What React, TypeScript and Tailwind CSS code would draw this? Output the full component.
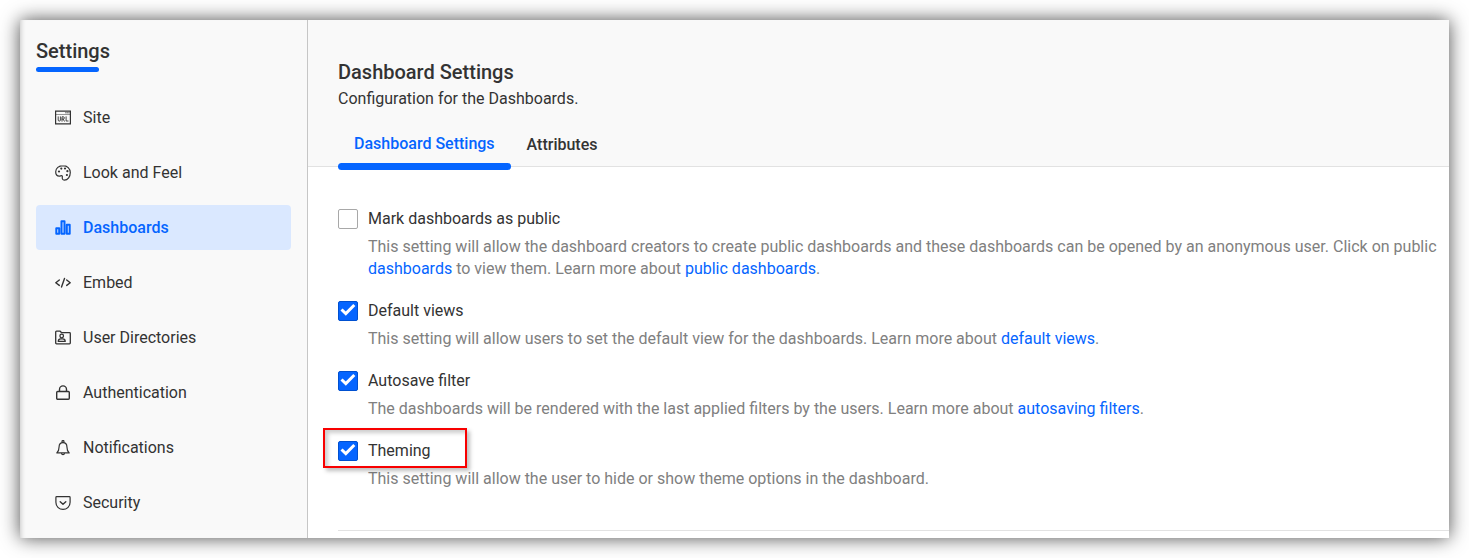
import React, { useState } from "react";

const strokeProps = {
  viewBox: "0 0 16 16",
  fill: "none",
  stroke: "currentColor",
  strokeWidth: 1.2,
  strokeLinecap: "round" as const,
  strokeLinejoin: "round" as const,
  className: "size-4 shrink-0",
  "aria-hidden": true,
};

const SiteIcon = () => (
  <svg {...strokeProps} strokeLinejoin="miter">
    <path d="M0.6 1.1h14.8v12.8H0.6z" />
    <path d="M1 4.5h14" strokeWidth="0.5" />
    <path d="M10.5 2.8h.8M12.3 2.8h.8M14 2.8h.3" strokeWidth="0.8" />
    <path
      d="M3.2 6.8v3.2a1.1 1.1 0 0 0 2.2 0V6.8M7 11.2V6.8h1.2a1.1 1.1 0 0 1 0 2.3H7M8.2 9.2l1.2 2M11.1 6.8v4.200h2"
      strokeWidth="0.9"
    />
  </svg>
);

const PaletteIcon = () => (
  <svg {...strokeProps}>
    <path d="M8 .6C3.8.6.7 3.2.7 6.8c0 2.6 1.6 4.400 3.600 4.400 1 0 1.500-.5 2.200-.5.900 0 1 .7.8 1.500-.3 1.600.4 2.900 2 2.900 3.600 0 6-3.600 6-7.500C15.300 3.500 12.200.6 8 .6z" />
    <g fill="currentColor" stroke="none">
      <circle cx="4" cy="6.5" r="1.1" />
      <circle cx="6.3" cy="3.6" r="1.1" />
      <circle cx="10" cy="3.5" r="1.1" />
      <circle cx="12.4" cy="6.2" r="1.1" />
      <circle cx="11.9" cy="10" r="1.1" />
    </g>
  </svg>
);

const ChartIcon = () => (
  <svg {...strokeProps} strokeWidth={2}>
    <path d="M1.3 8.3h2.900v5.500H1.300zM6.500 1.300h3v12.500h-3zM11.800 4.800h2.900v9h-2.900z" />
  </svg>
);

const CodeIcon = () => (
  <svg {...strokeProps} strokeWidth={1.4}>
    <path d="M4.300 5 .8 7.700l3.500 2.700M11.700 5 15.200 7.700l-3.500 2.700M9.500 3.500 6.500 12" />
  </svg>
);

const DirectoryIcon = () => (
  <svg {...strokeProps} strokeWidth={1.3}>
    <path d="M.7 13V2c0-.5.3-.8.8-.8h3.700l1.400 1.500h7.900c.5 0 .8.3.8.8V13c0 .5-.3.800-.8.800h-13c-.5 0-.8-.3-.8-.8z" />
    <circle cx="6.7" cy="6" r="1.8" />
    <path d="M3.300 11.400c0-1.800 1.200-2.600 2.400-2.600h2c1.300 0 2.500.8 2.500 2.600z" />
  </svg>
);

const LockIcon = () => (
  <svg {...strokeProps} strokeWidth={1.4}>
    <rect x="1.7" y="6.5" width="12.6" height="7.8" rx="1" />
    <path d="M4.500 6.300V4.400a3.500 3.500 0 0 1 7 0v1.900" />
  </svg>
);

const BellIcon = () => (
  <svg {...strokeProps}>
    <circle cx="8" cy="1.5" r="1" />
    <path d="M8 2.600c-2.600 0-3.900 1.800-3.900 4.100 0 3.300-.7 4.700-2.300 6.200h12.400c-1.600-1.500-2.300-2.900-2.300-6.200 0-2.300-1.300-4.100-3.900-4.100zM6.500 13.200c.2 1.900 2.800 1.900 3 0" />
  </svg>
);

const ShieldIcon = () => (
  <svg {...strokeProps}>
    <path d="M1.700 1.600h12.600c.5 0 .8.3.8.8v4.800c0 4-3 7.200-7.100 7.200S.9 11.200.9 7.200V2.400c0-.5.3-.8.8-.8z" />
    <path d="M5.200 6.700 8 9.300l2.800-2.600" strokeWidth="1.4" />
  </svg>
);

const navItems = [
  { label: "Site", icon: SiteIcon },
  { label: "Look and Feel", icon: PaletteIcon },
  { label: "Dashboards", icon: ChartIcon, active: true },
  { label: "Embed", icon: CodeIcon },
  { label: "User Directories", icon: DirectoryIcon },
  { label: "Authentication", icon: LockIcon },
  { label: "Notifications", icon: BellIcon },
  { label: "Security", icon: ShieldIcon },
];

function TextLink({ children }: { children: React.ReactNode }) {
  return (
    <a href="#" className="text-[#0565ff] hover:underline">
      {children}
    </a>
  );
}

type SettingProps = {
  id: string;
  label: string;
  initial?: boolean;
  highlighted?: boolean;
  children: React.ReactNode;
};

function Setting({ id, label, initial = false, highlighted = false, children }: SettingProps) {
  const [checked, setChecked] = useState(initial);
  return (
    <div>
      <div className="relative flex w-fit items-center gap-2.5">
        {highlighted && (
          <div className="pointer-events-none absolute -top-[13px] -right-9 -bottom-[7px] -left-[15px] border-2 border-[#f80000] shadow-[3px_3px_4px_rgba(0,0,0,0.25),inset_3px_3px_4px_rgba(0,0,0,0.2)]" />
        )}
        <span className="grid size-5 shrink-0">
          <input
            id={id}
            type="checkbox"
            checked={checked}
            onChange={(e) => setChecked(e.target.checked)}
            aria-describedby={`${id}-hint`}
            className="col-start-1 row-start-1 size-5 appearance-none rounded-xs border border-[#a8a8a8] bg-white checked:border-[#0050d0] checked:bg-[#0565ff]"
          />
          {checked && (
            <svg
              viewBox="0 0 20 20"
              fill="none"
              stroke="white"
              strokeWidth="3"
              aria-hidden="true"
              className="pointer-events-none col-start-1 row-start-1 size-5"
            >
              <path d="M3.500 8.500l4.300 4.100L16.300 4" />
            </svg>
          )}
        </span>
        <label htmlFor={id} className="text-base leading-5 text-[#333333]">
          {label}
        </label>
      </div>
      <p id={`${id}-hint`} className="mt-[7px] pl-[30px] text-base leading-[22px] text-[#808080]">
        {children}
      </p>
    </div>
  );
}

export default function App() {
  return (
    <div className="flex min-h-screen bg-white p-5 font-['Roboto',sans-serif] text-[#333333]">
      <div className="flex flex-1 bg-white shadow-[0_0_18px_rgba(0,0,0,0.7)]">
        <aside className="w-72 shrink-0 border-r border-[#c6c6c6] bg-[#f9f9f9] px-4 pt-[19px] shadow-[inset_5px_0_5px_-4px_rgba(0,0,0,0.2)]">
          <h1 className="text-xl leading-6 font-medium">Settings</h1>
          <div className="mt-1 h-[5px] w-[63px] rounded-full bg-[#0565ff]" />
          <nav className="mt-[23px] flex flex-col gap-2.5">
            {navItems.map(({ label, icon: Icon, active }) => (
              <a
                key={label}
                href="#"
                aria-current={active ? "page" : undefined}
                className={
                  active
                    ? "flex h-[45px] items-center gap-3 rounded bg-[#dae8ff] px-[19px] text-base font-medium text-[#0565ff]"
                    : "flex h-[45px] items-center gap-3 rounded px-[19px] text-base"
                }
              >
                <Icon />
                {label}
              </a>
            ))}
          </nav>
        </aside>

        <main className="min-w-0 flex-1">
          <header className="border-b border-[#e2e2e2] bg-[#f9f9f9] px-[30px] pt-10">
            <h2 className="text-xl leading-6 font-medium">Dashboard Settings</h2>
            <p className="mt-1 text-base leading-[22px]">Configuration for the Dashboards.</p>
            <div role="tablist" className="mt-5 -mb-1 flex items-start">
              <button
                role="tab"
                aria-selected="true"
                className="flex flex-col text-base leading-7 font-medium text-[#0565ff]"
              >
                <span className="px-4">Dashboard Settings</span>
                <span className="mt-[5px] h-[7px] w-full rounded-full bg-[#0565ff]" />
              </button>
              <button
                role="tab"
                aria-selected="false"
                className="px-4 text-base leading-[30px] font-medium"
              >
                Attributes
              </button>
            </div>
          </header>

          <div className="flex flex-col gap-[21px] pt-[42px] pr-2 pl-[30px]">
            <Setting id="public" label="Mark dashboards as public">
              This setting will allow the dashboard creators to create public dashboards and these
              dashboards can be opened by an anonymous user. Click on public{" "}
              <TextLink>dashboards</TextLink> to view them. Learn more about{" "}
              <TextLink>public dashboards</TextLink>.
            </Setting>
            <Setting id="views" label="Default views" initial>
              This setting will allow users to set the default view for the dashboards. Learn more
              about <TextLink>default views</TextLink>.
            </Setting>
            <Setting id="autosave" label="Autosave filter" initial>
              The dashboards will be rendered with the last applied filters by the users. Learn more
              about <TextLink>autosaving filters</TextLink>.
            </Setting>
            <Setting id="theming" label="Theming" initial highlighted>
              This setting will allow the user to hide or show theme options in the dashboard.
            </Setting>
          </div>
          <hr className="mt-10 ml-[30px] border-[#e2e2e2]" />
        </main>
      </div>
    </div>
  );
}
